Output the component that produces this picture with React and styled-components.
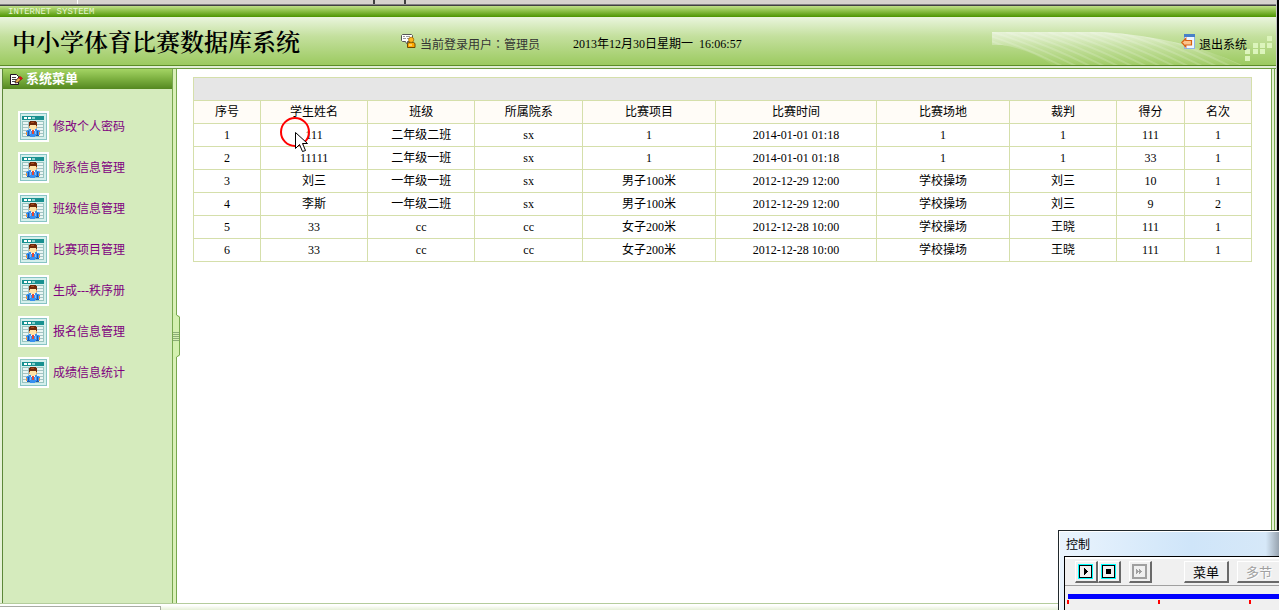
import React from 'react'
import styled, { createGlobalStyle } from 'styled-components'

const GlobalStyle = createGlobalStyle`
  * {
    box-sizing: border-box;
  }
  body {
    margin: 0;
    background: #000;
    color: #000;
    font-family: "Liberation Serif", "Noto Sans CJK SC", serif;
    font-size: 12px;
    line-height: 16px;
  }
`

const Page = styled.div`
  position: relative;
  display: flex;
  flex-direction: column;
  min-height: 100vh;
  margin-right: 2px;
  border-right: 1px solid #c8c8c8;
  background: #fff;
`

const BrowserEdge = styled.div`
  display: flex;
  height: 6px;
  background: #d6d3ce;
  border-bottom: 1px solid #404040;
  box-shadow: inset 0 -1px 0 #848284;
`
const EdgeTab = styled.div`
  width: ${(props) => props.$width};
  height: 4px;
  border-right: ${(props) => (props.$light ? '1px solid #fff' : '2px solid #404040')};
`

const TopBar = styled.div`
  height: 11px;
  padding-left: 8px;
  background: linear-gradient(#c0e088, #8cc048 45%, #4c9400);
  color: #e6f5d0;
  font-family: "Liberation Mono", monospace;
  font-size: 9px;
  line-height: 12px;
`

const Header = styled.header`
  position: relative;
  display: flex;
  align-items: center;
  height: 49px;
  padding: 0 29px 0 12px;
  background: linear-gradient(#eaf5de, #c4e09e 40%, #9cca60);
  border-bottom: 1px solid #5c8c28;
`
const HeaderLine = styled.div`
  height: 3px;
  background: #e2eed6;
  border-bottom: 1px solid #6c9c40;
`
const Title = styled.h1`
  width: 389px;
  margin: 0;
  font-family: "Noto Serif CJK SC", "Noto Sans CJK SC", serif;
  font-size: 24px;
  font-weight: 600;
  line-height: 32px;
`
const User = styled.div`
  display: flex;
  align-items: flex-start;
  gap: 4px;
  width: 172px;
  padding-top: 4px;
  color: #333;
  font-family: "Liberation Serif", "Noto Sans CJK TC", serif;
  white-space: nowrap;
`
const Clock = styled.div`
  padding-top: 6px;
  white-space: pre;
`
const Logout = styled.a`
  position: relative;
  z-index: 1;
  display: flex;
  align-items: flex-start;
  gap: 4px;
  margin-left: auto;
  padding-top: 4px;
  color: #000;
  text-decoration: none;
  white-space: nowrap;
`
const IconLabel = styled.span`
  padding-top: 3px;
`
const Waves = styled.svg`
  position: absolute;
  right: 28px;
  bottom: 0;
`
const Squares = styled.svg`
  position: absolute;
  right: 4px;
  bottom: 3px;
`

const Main = styled.div`
  display: flex;
  flex: 1;
  padding: 0 1px 0 2px;
  background: #e6f2d8;
`
const Sidebar = styled.aside`
  width: 171px;
  flex-shrink: 0;
  background: #d5ebbd;
  border-left: 1px solid #5c8838;
  border-right: 1px solid #78a850;
`
const SidebarTitle = styled.h2`
  display: flex;
  align-items: center;
  gap: 3px;
  height: 20px;
  margin: 0 0 22px;
  padding: 0 7px;
  background: linear-gradient(#a4d464, #7cb040 50%, #548820);
  color: #fff;
  font-size: 13px;
  font-weight: 700;
  line-height: 20px;
`
const Menu = styled.nav`
  display: flex;
  flex-direction: column;
  gap: 10px;
  padding-left: 15px;
`
const MenuLink = styled.a`
  display: flex;
  align-items: center;
  gap: 4px;
  height: 31px;
  color: #800080;
  text-decoration: none;
`

const Splitter = styled.div`
  position: relative;
  width: 4px;
  flex-shrink: 0;
  background: #daf0b8;
  border-right: 1px solid #78a850;
`
const Grip = styled.button`
  position: absolute;
  top: 244px;
  left: -1px;
  width: 9px;
  height: 46px;
  padding: 0;
  border: 0;
  background: none;
  line-height: 0;
`

const Content = styled.main`
  flex: 1;
  padding: 8px 19px 8px 16px;
  background: #fff;
  border-right: 1px solid #78a850;
`
const RightEdge = styled.div`
  width: 3px;
  background: #e6f2d8;
  border-right: 1px solid #78a850;
`

const Table = styled.table`
  width: 100%;
  border-collapse: collapse;
  table-layout: fixed;
  text-align: center;
`
const Col = styled.col`
  width: ${(props) => props.$width}%;
`
const Th = styled.th`
  height: 23px;
  padding: 0;
  background: ${(props) => (props.$bar ? '#e6e6e6' : '#fffcf7')};
  border: 1px solid #d5dfab;
  font-weight: 400;
`
const Td = styled.td`
  height: 23px;
  padding: 0;
  border: 1px solid #d5dfab;
`

const Bottom = styled.div`
  height: 7px;
  padding-top: 2px;
  background: linear-gradient(#fff 20%, #e6f0d8);
  border-top: 1px solid #b4cc9c;
`
const StatusTip = styled.div`
  width: 161px;
  height: 4px;
  background: #fff;
  border-top: 1px solid #a8aca4;
  border-right: 1px solid #a8aca4;
`

const Pointer = styled.svg`
  position: absolute;
  top: 116px;
  left: 279px;
  pointer-events: none;
`

const Player = styled.section`
  position: fixed;
  right: 0;
  bottom: 0;
  z-index: 2;
  width: 221px;
  height: 80px;
  overflow: hidden;
  background: linear-gradient(90deg, #eaf4fd, #cfe5f9 60%, #d6e8f8 94%, #98a4b0);
  border-top: 1px solid #20282c;
  border-left: 1px solid #20282c;
  box-shadow: inset 1px 1px 0 #fff;
  font-family: "Noto Sans CJK SC", sans-serif;
`
const PlayerTitle = styled.div`
  height: 25px;
  padding-left: 7px;
  line-height: 26px;
`
const PlayerBody = styled.div`
  height: 60px;
  margin-left: 5px;
  background: #f0f0f0;
  border-top: 1px solid #000;
  border-left: 1px solid #000;
`
const PlayerTools = styled.div`
  display: flex;
  height: 29px;
  padding: 2px 0 0 10px;
  border-top: 2px solid #fff;
  border-bottom: 1px solid #a0a0a0;
`
const ToolButton = styled.button`
  display: flex;
  align-items: center;
  justify-content: ${(props) => (props.$wide ? 'center' : 'flex-start')};
  flex-shrink: 0;
  width: ${(props) => (props.$wide ? 45 : 23)}px;
  height: 22px;
  margin-right: ${(props) => props.$gap || 0}px;
  padding: ${(props) => (props.$wide ? 0 : '0 0 0 2px')};
  background: #f0f0f0;
  border: 1px solid #fff;
  border-right: 2px solid #696969;
  border-bottom: 2px solid #696969;
  color: #000;
  font-family: inherit;
  font-size: 13px;
  line-height: 16px;

  &:disabled {
    color: #a0a0a0;
    text-shadow: 1px 1px 0 #fff;
  }
`
const Track = styled.div`
  height: 5px;
  margin: 8px 0 1px 3px;
  background: #0000ff;
`
const Ticks = styled.div`
  display: flex;
  gap: 89px;
  padding-left: 2px;
`
const Tick = styled.span`
  width: 2px;
  height: 4px;
  flex-shrink: 0;
  background: #f00;
`

const UserIcon = () => (
  <svg width="15" height="15" viewBox="0 0 15 15">
    <path d="M1.500.500h9l1 1v5l-1 1H6.500v2h-1l-1-2h-3l-1-1v-5z" fill="#fff" stroke="#555" />
    <path d="M2 2.500h2M5 2.500h4M2 4.500h3M6 4.500h2" stroke="#999" />
    <path d="M6.500 13.500v-4l1.500-1h4.500l1.500 1v4z" fill="#ffa800" stroke="#704800" />
    <circle cx="10.200" cy="5.800" r="2.600" fill="#ffb820" stroke="#a06800" strokeWidth=".8" />
    <path d="M8 10h3v2H8z" fill="#ffd060" />
  </svg>
)

const LogoutIcon = () => (
  <svg width="14" height="15" viewBox="0 0 14 15">
    <path d="M3 0h11v15H3z" fill="#8cb4e8" />
    <path d="M3 0h11v3H3z" fill="#4880c8" />
    <path d="M4 3h9v11H4z" fill="#f0f6ff" />
    <path d="M.800 8.500l4-4v2h5.700v4.500H4.800v2z" fill="#fbc48c" stroke="#d86010" strokeWidth="1.200" />
  </svg>
)

const NoteIcon = () => (
  <svg width="13" height="13" viewBox="0 0 13 13">
    <path d="M.500 1.500h6l2 2v8h-8z" fill="#fff" stroke="#201020" />
    <path d="M2 4.500h4M2 6.500h4M2 8.500h3" stroke="#444" />
    <path d="M5 10l1-3 4-3.500 2 2-4 4z" fill="#e8b050" stroke="#301010" strokeWidth=".8" />
    <path d="M8.500 5l2-1.800 2.200 2-2 2z" fill="#d81010" />
  </svg>
)

const PersonIcon = () => (
  <svg width="31" height="31" viewBox="0 0 31 31" shapeRendering="crispEdges">
    <path d="M0 0h31v31H0z" fill="#fff" />
    <path d="M2.500 2.500h26v26h-26z" fill="#d4efec" stroke="#88c4c4" />
    <path d="M4 5h22v4H4z" fill="#189090" />
    <path d="M6 6h3v2H6zM10 6h3v2h-3z" fill="#fff" />
    <path d="M14 6h3v2h-3z" fill="#90d4d0" />
    <path d="M4.500 10.500h21v15h-21z" fill="#eaf6f4" stroke="#98c4c0" />
    <path d="M5 13.500h20M5 16.500h20M5 19.500h20M5 22.500h20M10.500 11v14M18.500 11v14" stroke="#a4c4c4" />
    <path d="M9 19h2v-1h8v1h2v1h1v4h-2v1h-3v1h-5v-1H9v-1H8v-4h1z" fill="#3890f0" />
    <path d="M10 20h1v4h-1zM19 20h1v4h-1zM9 24h3v1H9zM18 24h3v1h-3z" fill="#1858b0" />
    <path d="M12 20h1v3h-1zM17 20h1v3h-1z" fill="#80c0ff" />
    <path d="M13 18h4v2h-1v3h-2v-3h-1z" fill="#fff" />
    <path d="M14 19h2v4h-2z" fill="#e04838" />
    <path d="M8 21h1v3H8zM21 21h1v3h-1z" fill="#ff9830" />
    <path d="M11 13h8v4h-1v1h-1v1h-4v-1h-1v-1h-1z" fill="#ffe4a8" />
    <path d="M12 10h6v1h1v4h-1v-1h-6v1h-1v-4h1z" fill="#702808" />
    <path d="M13 11h3v1h-3z" fill="#a84c20" />
    <path d="M11 15h1v2h-1zM18 15h1v2h-1z" fill="#e8a860" />
  </svg>
)

const PlayIcon = ({ kind }) => (
  <svg width="15" height="15" viewBox="0 0 15 15" shapeRendering="crispEdges">
    <path d="M0 0h15v15H0z" fill={kind === 'next' ? '#a0a0a0' : '#00ffff'} />
    <path d="M1 1h13v13H1z" fill={kind === 'next' ? '#a0a0a0' : '#000'} />
    <path d="M2 2h11v11H2z" fill="#f0f0f0" />
    {kind === 'play' && <path d="M6 4h1v1h1v1h1v1h1v1H9v1H8v1H7v1H6z" />}
    {kind === 'stop' && <path d="M5 5h5v5H5z" />}
    {kind === 'next' && <path d="M4 5h1v1h1v1h1V5h1v1h1v1h1v1H9v1H8v1H7V8H6v1H5v1H4z" fill="#a0a0a0" />}
  </svg>
)

const menu = [
  '修改个人密码',
  '院系信息管理',
  '班级信息管理',
  '比赛项目管理',
  '生成---秩序册',
  '报名信息管理',
  '成绩信息统计',
]

const widths = [6.34, 10.12, 10.12, 10.2, 12.57, 15.21, 12.57, 10.11, 6.43, 6.33]

const columns = ['序号', '学生姓名', '班级', '所属院系', '比赛项目', '比赛时间', '比赛场地', '裁判', '得分', '名次']

const rows = [
  ['1', '111', '二年级二班', 'sx', '1', '2014-01-01 01:18', '1', '1', '111', '1'],
  ['2', '11111', '二年级一班', 'sx', '1', '2014-01-01 01:18', '1', '1', '33', '1'],
  ['3', '刘三', '一年级一班', 'sx', '男子100米', '2012-12-29 12:00', '学校操场', '刘三', '10', '1'],
  ['4', '李斯', '一年级二班', 'sx', '男子100米', '2012-12-29 12:00', '学校操场', '刘三', '9', '2'],
  ['5', '33', 'cc', 'cc', '女子200米', '2012-12-28 10:00', '学校操场', '王晓', '111', '1'],
  ['6', '33', 'cc', 'cc', '女子200米', '2012-12-28 10:00', '学校操场', '王晓', '111', '1'],
]

const App = () => {
  return (
    <>
      <GlobalStyle />
      <Page>
        <BrowserEdge>
          <EdgeTab $width="78px" $light />
          <EdgeTab $width="297px" />
          <EdgeTab $width="31px" />
        </BrowserEdge>
        <TopBar>INTERNET SYSTEEM</TopBar>
        <Header>
          <Waves width="256" height="33" viewBox="0 0 256 33">
            <defs>
              <linearGradient id="fade" x1="0" y1="0" x2="0" y2="1">
                <stop offset="0" stopColor="#fff" stopOpacity=".55" />
                <stop offset=".45" stopColor="#fff" stopOpacity=".2" />
                <stop offset="1" stopColor="#fff" stopOpacity=".04" />
              </linearGradient>
              <clipPath id="sweep">
                <path d="M0 0H110Q190 5 250 33H60Q40 18 10 13H0z" />
              </clipPath>
            </defs>
            <g clipPath="url(#sweep)">
              <path d="M0 0h256v33H0z" fill="url(#fade)" />
              {Array.from({ length: 28 }, (_, i) => (
                <path key={i} d={`M${i * 14 - 140} 0q40 12 84 34`} fill="none" stroke="#fff" strokeOpacity=".16" strokeWidth="2" />
              ))}
            </g>
          </Waves>
          <Squares width="28" height="26" viewBox="0 0 28 26" fill="#dcf4bc">
            <path d="M23 0h5v5h-5zM9 7h5v5H9zM16 7h5v5h-5zM23 7h5v5h-5zM1 13h5v5H1zM9 13h5v5H9zM16 13h5v5h-5zM1 20h5v5H1z" />
          </Squares>
          <Title>中小学体育比赛数据库系统</Title>
          <User>
            <UserIcon />
            <IconLabel>当前登录用户：管理员</IconLabel>
          </User>
          <Clock>2013年12月30日星期一  16:06:57</Clock>
          <Logout href="#">
            <LogoutIcon />
            <IconLabel>退出系统</IconLabel>
          </Logout>
        </Header>
        <HeaderLine />
        <Main>
          <Sidebar>
            <SidebarTitle>
              <NoteIcon />
              系统菜单
            </SidebarTitle>
            <Menu>
              {menu.map((item) => (
                <MenuLink href="#" key={item}>
                  <PersonIcon />
                  {item}
                </MenuLink>
              ))}
            </Menu>
          </Sidebar>
          <Splitter>
            <Grip aria-label="收起菜单">
              <svg width="9" height="46" viewBox="0 0 9 46">
                <path d="M1 0h3l1 2 3 1v40l-3 1-1 2H1z" fill="#d4f0b0" />
                <path d="M4.500 0v2l3 2v38l-3 2v2" fill="none" stroke="#78a850" />
                <path d="M1 19.500h6M1 21.500h6M1 23.500h6M1 25.500h6M1 27.500h6" stroke="#8cac78" />
              </svg>
            </Grip>
          </Splitter>
          <Content>
            <Table>
              <colgroup>
                {widths.map((width, i) => (
                  <Col key={i} $width={width} />
                ))}
              </colgroup>
              <thead>
                <tr>
                  <Th $bar colSpan={10} />
                </tr>
                <tr>
                  {columns.map((name) => (
                    <Th key={name}>{name}</Th>
                  ))}
                </tr>
              </thead>
              <tbody>
                {rows.map((row) => (
                  <tr key={row[0]}>
                    {row.map((cell, i) => (
                      <Td key={i}>{cell}</Td>
                    ))}
                  </tr>
                ))}
              </tbody>
            </Table>
          </Content>
          <RightEdge />
        </Main>
        <Bottom>
          <StatusTip />
        </Bottom>
        <Pointer width="34" height="38" viewBox="0 0 34 38">
          <circle cx="16" cy="16" r="14" fill="none" stroke="#f00" strokeWidth="2" />
          <path d="M16.500 16.500v16l4-4 3 7 3-1-3-7h5z" fill="#fff" stroke="#000" />
        </Pointer>
      </Page>
      <Player>
        <PlayerTitle>控制</PlayerTitle>
        <PlayerBody>
          <PlayerTools>
            <ToolButton aria-label="播放"><PlayIcon kind="play" /></ToolButton>
            <ToolButton aria-label="停止" $gap={8}><PlayIcon kind="stop" /></ToolButton>
            <ToolButton aria-label="快进" $gap={32} disabled><PlayIcon kind="next" /></ToolButton>
            <ToolButton $wide $gap={8}>菜单</ToolButton>
            <ToolButton $wide disabled>多节</ToolButton>
          </PlayerTools>
          <Track />
          <Ticks>
            <Tick />
            <Tick />
            <Tick />
          </Ticks>
        </PlayerBody>
      </Player>
    </>
  )
}

export default App
